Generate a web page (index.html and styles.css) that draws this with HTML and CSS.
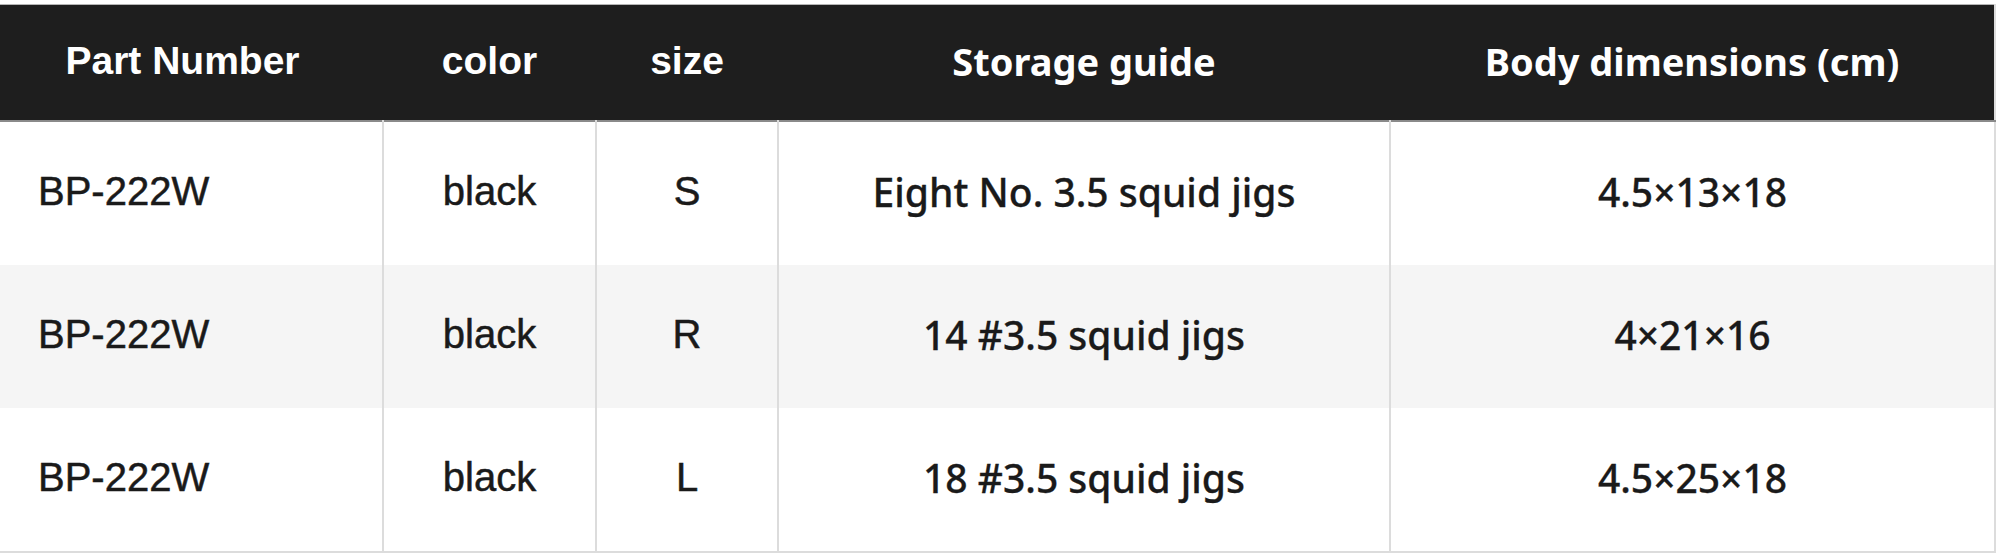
FILE: index.html
```html
<!DOCTYPE html>
<html lang="en">
<head>
<meta charset="utf-8">
<title>Spec table</title>
<link rel="stylesheet" href="styles.css">
</head>
<body>
<table class="spec">
  <colgroup>
    <col class="c-part">
    <col class="c-color">
    <col class="c-size">
    <col class="c-guide">
    <col class="c-dim">
  </colgroup>
  <thead>
    <tr>
      <th class="part">Part Number</th>
      <th>color</th>
      <th>size</th>
      <th class="alt">Storage guide</th>
      <th class="alt">Body dimensions (cm)</th>
    </tr>
  </thead>
  <tbody>
    <tr>
      <td class="part">BP-222W</td>
      <td>black</td>
      <td>S</td>
      <td class="alt">Eight No. 3.5 squid jigs</td>
      <td class="alt">4.5×13×18</td>
    </tr>
    <tr class="shade">
      <td class="part">BP-222W</td>
      <td>black</td>
      <td>R</td>
      <td class="alt">14 #3.5 squid jigs</td>
      <td class="alt">4×21×16</td>
    </tr>
    <tr>
      <td class="part">BP-222W</td>
      <td>black</td>
      <td>L</td>
      <td class="alt">18 #3.5 squid jigs</td>
      <td class="alt">4.5×25×18</td>
    </tr>
  </tbody>
</table>
</body>
</html>
```

FILE: styles.css
```css
html, body {
  margin: 0;
  padding: 0;
  background: #ffffff;
}

body {
  padding-top: 4px;
  font-family: "Liberation Sans", Arial, sans-serif;
  color: #1a1a1a;
}

.spec {
  width: 1996px;
  border-collapse: collapse;
  table-layout: fixed;
  border-top: 1px solid #b5b5b5;
  border-bottom: 2px solid #dcdcdc;
  border-right: 2px solid #dcdcdc;
}

.c-part { width: 383px; }
.c-color { width: 213px; }
.c-size { width: 182px; }
.c-guide { width: 612px; }
.c-dim { width: auto; }

.spec thead tr {
  background: #1e1e1e;
  border-bottom: 2px solid #8a8a8a;
}

.spec th {
  height: 111px;
  padding: 0 0 4px;
  color: #ffffff;
  font-size: 39px;
  font-weight: 700;
  text-align: center;
  vertical-align: middle;
}

.spec th.part {
  padding-right: 18px;
}

.spec td {
  height: 139px;
  padding: 0 0 4px;
  font-size: 40px;
  text-align: center;
  vertical-align: middle;
  border-left: 2px solid #dcdcdc;
  -webkit-text-stroke: 0.5px #1a1a1a;
}

.spec td:first-child {
  border-left: none;
}

.spec td.part {
  text-align: left;
  padding-left: 38px;
}

.spec td.alt {
  font-family: "Noto Sans", "Liberation Sans", sans-serif;
  font-size: 39px;
  font-weight: 500;
  -webkit-text-stroke: 0.3px #1a1a1a;
}

.spec th.alt {
  font-family: "Noto Sans", "Liberation Sans", sans-serif;
  font-size: 38px;
}

.spec tr.shade td {
  background: #f5f5f5;
}
```
